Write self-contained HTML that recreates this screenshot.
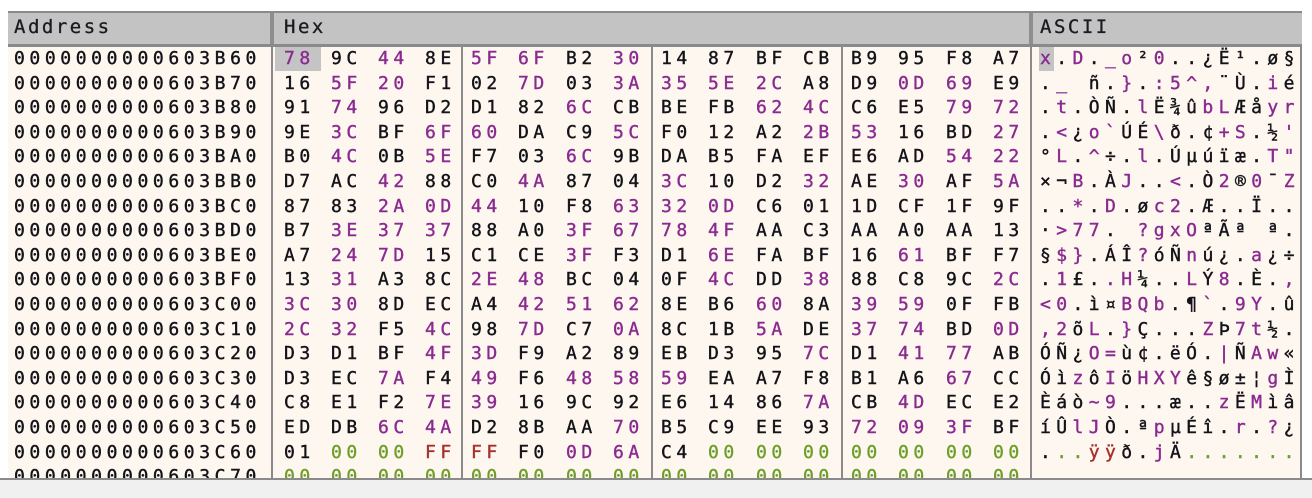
<!DOCTYPE html>
<html><head><meta charset="utf-8"><style>
html,body{margin:0;padding:0}
body{width:1312px;height:496px;position:relative;background:#fff;overflow:hidden;font-family:"DejaVu Sans Mono","Liberation Mono",monospace;font-size:18px;color:#121218}
#hd{position:absolute;left:8px;top:11px;width:1294px;height:31px;background:#c3c3c3;border-top:2px solid #8a8a8a;border-bottom:3px solid #8a8a8a;box-sizing:content-box}
#hd span{position:absolute;top:3px;letter-spacing:2.5px;color:#1a1a20;font-size:19px;-webkit-text-stroke:0.3px #1a1a20}
.hs{position:absolute;top:0;width:4px;height:31px;background:#8e8e8e}
#bd{position:absolute;left:8px;top:47px;width:1294px;height:432px;background:#fdf7ef;overflow:hidden}
#bot{position:absolute;left:0;top:478px;width:1312px;height:18px;background:#f0f0f0;border-top:2px solid #8a8a8a}
.vl{position:absolute;top:0;width:2px;height:432px;background:#8a8a8a}
.r{position:absolute;left:0;width:1312px;height:24.6px;line-height:22px;white-space:pre;-webkit-text-stroke:0.4px currentColor}
.r>*{position:absolute;top:0;letter-spacing:4.6px}
.r>:nth-child(1){left:14px}
.r>:nth-child(2){left:284px}.r>:nth-child(3){left:331px}.r>:nth-child(4){left:378px}.r>:nth-child(5){left:425px}
.r>:nth-child(6){left:471px}.r>:nth-child(7){left:518px}.r>:nth-child(8){left:566px}.r>:nth-child(9){left:613px}
.r>:nth-child(10){left:661px}.r>:nth-child(11){left:708px}.r>:nth-child(12){left:756px}.r>:nth-child(13){left:803px}
.r>:nth-child(14){left:851px}.r>:nth-child(15){left:898px}.r>:nth-child(16){left:946px}.r>:nth-child(17){left:993px}
.r>:nth-child(18){left:1040px;letter-spacing:5.4px}
.p,i{color:#8a2a90;font-style:normal}
.g,u{color:#6e9e2a;text-decoration:none}
.f,s{color:#a8302c;text-decoration:none}
#sel1{position:absolute;left:275px;top:47px;width:46px;height:24px;background:#c4c4c4}
#sel2{position:absolute;left:1039px;top:47px;width:15px;height:24px;background:#c4c4c4}
</style></head><body>
<div id="hd">
<span style="left:6px">Address</span>
<div class="hs" style="left:262px"></div>
<span style="left:276px">Hex</span>
<div class="hs" style="left:1021px"></div>
<span style="left:1032px">ASCII</span>
</div>
<div id="bd">
<div class="vl" style="left:263px"></div>
<div class="vl" style="left:453px"></div>
<div class="vl" style="left:643px"></div>
<div class="vl" style="left:833px"></div>
<div class="vl" style="left:1022px"></div>
<div class="vl" style="left:1292px"></div>
</div>
<div id="sel1"></div><div id="sel2"></div>
<div style="position:absolute;left:0;top:0;width:1312px;height:478px;overflow:hidden">
<div class="r" style="top:47.9px"><span>0000000000603B60</span><span class="p">78</span><span>9C</span><span class="p">44</span><span>8E</span><span class="p">5F</span><span class="p">6F</span><span>B2</span><span class="p">30</span><span>14</span><span>87</span><span>BF</span><span>CB</span><span>B9</span><span>95</span><span>F8</span><span>A7</span><span><i>x</i>.<i>D</i>.<i>_o</i>²<i>0</i>..¿Ë¹.ø§</span></div>
<div class="r" style="top:72.5px"><span>0000000000603B70</span><span>16</span><span class="p">5F</span><span class="p">20</span><span>F1</span><span>02</span><span class="p">7D</span><span>03</span><span class="p">3A</span><span class="p">35</span><span class="p">5E</span><span class="p">2C</span><span>A8</span><span>D9</span><span class="p">0D</span><span class="p">69</span><span>E9</span><span>.<i>_ </i>ñ.<i>}</i>.<i>:5^,</i>¨Ù.<i>i</i>é</span></div>
<div class="r" style="top:97.1px"><span>0000000000603B80</span><span>91</span><span class="p">74</span><span>96</span><span>D2</span><span>D1</span><span>82</span><span class="p">6C</span><span>CB</span><span>BE</span><span>FB</span><span class="p">62</span><span class="p">4C</span><span>C6</span><span>E5</span><span class="p">79</span><span class="p">72</span><span>.<i>t</i>.ÒÑ.<i>l</i>Ë¾û<i>bL</i>Æå<i>yr</i></span></div>
<div class="r" style="top:121.7px"><span>0000000000603B90</span><span>9E</span><span class="p">3C</span><span>BF</span><span class="p">6F</span><span class="p">60</span><span>DA</span><span>C9</span><span class="p">5C</span><span>F0</span><span>12</span><span>A2</span><span class="p">2B</span><span class="p">53</span><span>16</span><span>BD</span><span class="p">27</span><span>.<i>&lt;</i>¿<i>o`</i>ÚÉ<i>\</i>ð.¢<i>+S</i>.½<i>'</i></span></div>
<div class="r" style="top:146.3px"><span>0000000000603BA0</span><span>B0</span><span class="p">4C</span><span>0B</span><span class="p">5E</span><span>F7</span><span>03</span><span class="p">6C</span><span>9B</span><span>DA</span><span>B5</span><span>FA</span><span>EF</span><span>E6</span><span>AD</span><span class="p">54</span><span class="p">22</span><span>°<i>L</i>.<i>^</i>÷.<i>l</i>.Úµúïæ.<i>T"</i></span></div>
<div class="r" style="top:170.9px"><span>0000000000603BB0</span><span>D7</span><span>AC</span><span class="p">42</span><span>88</span><span>C0</span><span class="p">4A</span><span>87</span><span>04</span><span class="p">3C</span><span>10</span><span>D2</span><span class="p">32</span><span>AE</span><span class="p">30</span><span>AF</span><span class="p">5A</span><span>×¬<i>B</i>.À<i>J</i>..<i>&lt;</i>.Ò<i>2</i>®<i>0</i>¯<i>Z</i></span></div>
<div class="r" style="top:195.5px"><span>0000000000603BC0</span><span>87</span><span>83</span><span class="p">2A</span><span class="p">0D</span><span class="p">44</span><span>10</span><span>F8</span><span class="p">63</span><span class="p">32</span><span class="p">0D</span><span>C6</span><span>01</span><span>1D</span><span>CF</span><span>1F</span><span>9F</span><span>..<i>*</i>.<i>D</i>.ø<i>c2</i>.Æ..Ï..</span></div>
<div class="r" style="top:220.1px"><span>0000000000603BD0</span><span>B7</span><span class="p">3E</span><span class="p">37</span><span class="p">37</span><span>88</span><span>A0</span><span class="p">3F</span><span class="p">67</span><span class="p">78</span><span class="p">4F</span><span>AA</span><span>C3</span><span>AA</span><span>A0</span><span>AA</span><span>13</span><span>·<i>&gt;77</i>. <i>?gxO</i>ªÃª ª.</span></div>
<div class="r" style="top:244.7px"><span>0000000000603BE0</span><span>A7</span><span class="p">24</span><span class="p">7D</span><span>15</span><span>C1</span><span>CE</span><span class="p">3F</span><span>F3</span><span>D1</span><span class="p">6E</span><span>FA</span><span>BF</span><span>16</span><span class="p">61</span><span>BF</span><span>F7</span><span>§<i>$}</i>.ÁÎ<i>?</i>óÑ<i>n</i>ú¿.<i>a</i>¿÷</span></div>
<div class="r" style="top:269.3px"><span>0000000000603BF0</span><span>13</span><span class="p">31</span><span>A3</span><span>8C</span><span class="p">2E</span><span class="p">48</span><span>BC</span><span>04</span><span>0F</span><span class="p">4C</span><span>DD</span><span class="p">38</span><span>88</span><span>C8</span><span>9C</span><span class="p">2C</span><span>.<i>1</i>£.<i>.H</i>¼..<i>L</i>Ý<i>8</i>.È.<i>,</i></span></div>
<div class="r" style="top:293.9px"><span>0000000000603C00</span><span class="p">3C</span><span class="p">30</span><span>8D</span><span>EC</span><span>A4</span><span class="p">42</span><span class="p">51</span><span class="p">62</span><span>8E</span><span>B6</span><span class="p">60</span><span>8A</span><span class="p">39</span><span class="p">59</span><span>0F</span><span>FB</span><span><i>&lt;0</i>.ì¤<i>BQb</i>.¶<i>`</i>.<i>9Y</i>.û</span></div>
<div class="r" style="top:318.5px"><span>0000000000603C10</span><span class="p">2C</span><span class="p">32</span><span>F5</span><span class="p">4C</span><span>98</span><span class="p">7D</span><span>C7</span><span class="p">0A</span><span>8C</span><span>1B</span><span class="p">5A</span><span>DE</span><span class="p">37</span><span class="p">74</span><span>BD</span><span class="p">0D</span><span><i>,2</i>õ<i>L</i>.<i>}</i>Ç...<i>Z</i>Þ<i>7t</i>½.</span></div>
<div class="r" style="top:343.1px"><span>0000000000603C20</span><span>D3</span><span>D1</span><span>BF</span><span class="p">4F</span><span class="p">3D</span><span>F9</span><span>A2</span><span>89</span><span>EB</span><span>D3</span><span>95</span><span class="p">7C</span><span>D1</span><span class="p">41</span><span class="p">77</span><span>AB</span><span>ÓÑ¿<i>O=</i>ù¢.ëÓ.<i>|</i>Ñ<i>Aw</i>«</span></div>
<div class="r" style="top:367.7px"><span>0000000000603C30</span><span>D3</span><span>EC</span><span class="p">7A</span><span>F4</span><span class="p">49</span><span>F6</span><span class="p">48</span><span class="p">58</span><span class="p">59</span><span>EA</span><span>A7</span><span>F8</span><span>B1</span><span>A6</span><span class="p">67</span><span>CC</span><span>Óì<i>z</i>ô<i>I</i>ö<i>HXY</i>ê§ø±¦<i>g</i>Ì</span></div>
<div class="r" style="top:392.3px"><span>0000000000603C40</span><span>C8</span><span>E1</span><span>F2</span><span class="p">7E</span><span class="p">39</span><span>16</span><span>9C</span><span>92</span><span>E6</span><span>14</span><span>86</span><span class="p">7A</span><span>CB</span><span class="p">4D</span><span>EC</span><span>E2</span><span>Èáò<i>~9</i>...æ..<i>z</i>Ë<i>M</i>ìâ</span></div>
<div class="r" style="top:416.9px"><span>0000000000603C50</span><span>ED</span><span>DB</span><span class="p">6C</span><span class="p">4A</span><span>D2</span><span>8B</span><span>AA</span><span class="p">70</span><span>B5</span><span>C9</span><span>EE</span><span>93</span><span class="p">72</span><span class="p">09</span><span class="p">3F</span><span>BF</span><span>íÛ<i>lJ</i>Ò.ª<i>p</i>µÉî.<i>r</i>.<i>?</i>¿</span></div>
<div class="r" style="top:441.5px"><span>0000000000603C60</span><span>01</span><span class="g">00</span><span class="g">00</span><span class="f">FF</span><span class="f">FF</span><span>F0</span><span class="p">0D</span><span class="p">6A</span><span>C4</span><span class="g">00</span><span class="g">00</span><span class="g">00</span><span class="g">00</span><span class="g">00</span><span class="g">00</span><span class="g">00</span><span>.<u>..</u><s>ÿÿ</s>ð.<i>j</i>Ä<u>.......</u></span></div>
<div class="r" style="top:466.1px"><span>0000000000603C70</span><span class="g">00</span><span class="g">00</span><span class="g">00</span><span class="g">00</span><span class="g">00</span><span class="g">00</span><span class="g">00</span><span class="g">00</span><span class="g">00</span><span class="g">00</span><span class="g">00</span><span class="g">00</span><span class="g">00</span><span class="g">00</span><span class="g">00</span><span class="g">00</span><span><u>................</u></span></div>
</div>
<div id="bot"></div>
</body></html>
